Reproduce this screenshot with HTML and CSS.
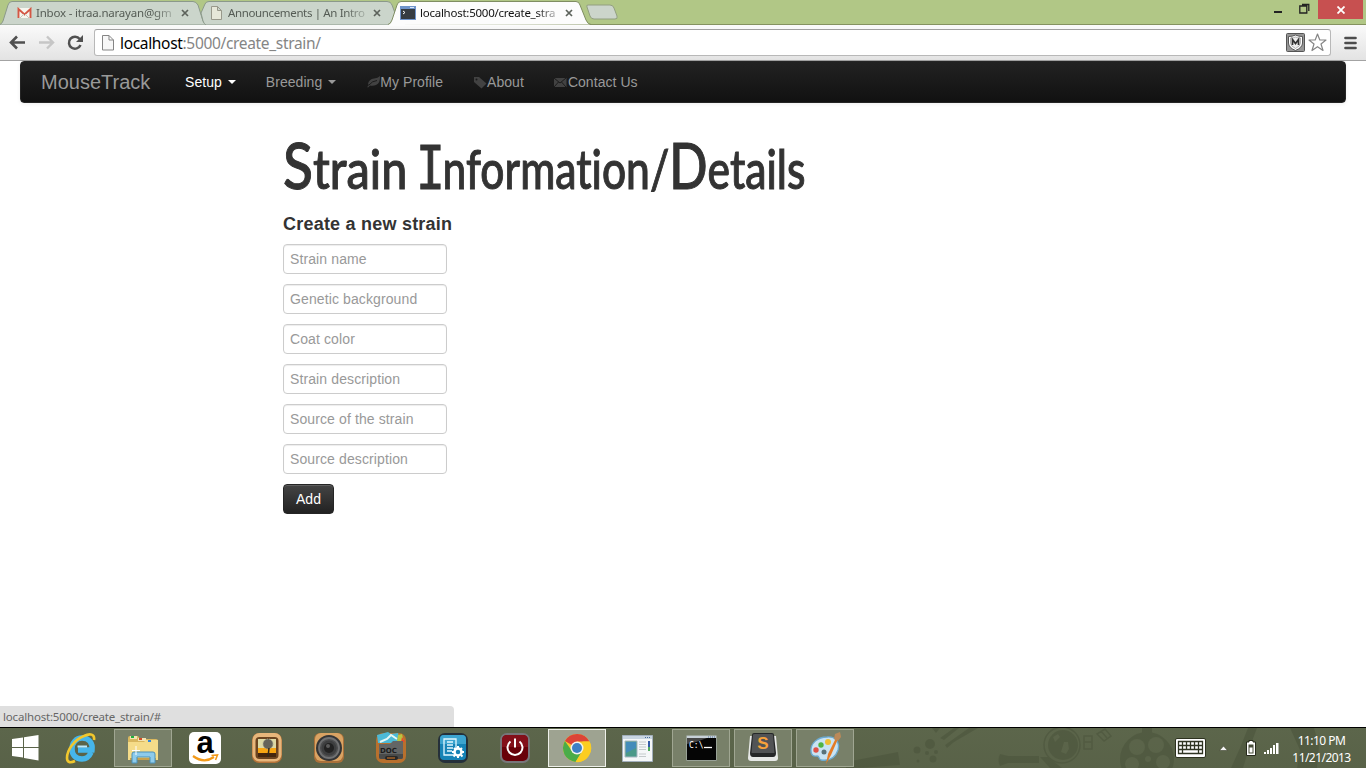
FILE: index.html
```html
<!DOCTYPE html>
<html lang="en">
<head>
<meta charset="utf-8">
<title>MouseTrack</title>
<link rel="stylesheet" href="styles.css">
</head>
<body>
<div class="screen">
  <header class="tabstrip">
    <div class="tab tab-first">
      <svg class="tab-shape" width="208" height="25" viewBox="0 0 208 25"><path d="M-1 25Q2 24 3 21L8 5Q9 1.500 12 1.500H193Q196 1.500 198 5L203 21Q204 24 208 24.500V25Z" fill="#cbd5cb" stroke="#8b998b"/></svg>
      <svg class="fav fav-mail" width="15" height="12" viewBox="0 0 15 12"><path fill="#f6f6ee" d="M1 1h13v10H1z"/><path d="M1.500 11V2L7.500 7.500 13.500 2V11" fill="none" stroke="#d45744" stroke-width="1.900"/><path d="M3 11L7 7M12 11L8 7" stroke="#c5c5bb"/></svg>
      <span class="tab-title t1">Inbox - itraa.narayan@gm</span>
      <svg class="close" width="8" height="8" viewBox="0 0 8 8"><path d="M1 1l6 6M7 1L1 7"/></svg>
    </div>
    <div class="tab tab-second">
      <svg class="tab-shape" width="208" height="25" viewBox="0 0 208 25"><path d="M8 25Q6 24 5 21L3 13L7 4Q8 1.500 11 1.500H189Q193 1.500 194 5L200 21Q201 24 205 24.500V25Z" fill="#cbd5cb" stroke="#8b998b"/></svg>
      <svg class="fav fav-page" width="11" height="14" viewBox="0 0 11 14"><path d="M.5.5h6l4 4v9H.5zM6.500.5v4h4" fill="#e6e8d9" stroke="#98998b"/></svg>
      <span class="tab-title t2">Announcements | An Intro</span>
      <svg class="close" width="8" height="8" viewBox="0 0 8 8"><path d="M1 1l6 6M7 1L1 7"/></svg>
    </div>
    <div class="tab tab-active">
      <svg class="tab-shape" width="210" height="26" viewBox="0 0 210 26"><path d="M-1 25Q3 24 4 20L9 5Q10 1.500 13 1.500H188Q191 1.500 192 5L198 20Q200 24.500 203 24.500" fill="#fcfcfc" stroke="#7f8d62"/><path d="M0 25h202v1H0z" fill="#fcfcfc"/></svg>
      <svg class="fav fav-term" width="16" height="14" viewBox="0 0 16 14"><path fill="#6e93cb" d="M0 0h16v14H0z"/><path fill="#353b42" d="M1 3h14v10H1z"/><path d="M3 5l2 1.500L3 8" stroke="#fff" fill="none"/><path d="M10 1.500h4" stroke="#dbe8f7"/></svg>
      <span class="tab-title t3">localhost:5000/create_stra</span>
      <svg class="close" width="8" height="8" viewBox="0 0 8 8"><path d="M1 1l6 6M7 1L1 7"/></svg>
    </div>
    <svg class="newtab" width="33" height="17" viewBox="0 0 33 17"><path d="M3 1h22q3 0 4 3l3 8q1 3-2 3H9q-3 0-4-3L2 3Q1 1 3 1z" fill="#ccd5cb" stroke="#929f80"/></svg>
    <div class="winbuttons">
      <svg width="30" height="18" viewBox="0 0 30 18"><path fill="#222" d="M0 11h8v2H0z"/></svg>
      <svg width="15" height="18" viewBox="0 0 15 18"><path d="M.8 6h7v7H.8zM3 4.500h6.800V11" fill="none" stroke="#222" stroke-width="1.300"/></svg>
      <div class="win-close"><svg width="8" height="8" viewBox="0 0 8 8"><path d="M.5.5l7 7M7.500.5l-7 7" stroke="#fff" stroke-width="1.800"/></svg></div>
    </div>
  </header>

  <div class="toolbar">
    <svg class="navicons" width="86" height="34" viewBox="0 0 86 34"><path d="M25 16.500H12M17 10.500l-6 6 6 6" fill="none" stroke="#505050" stroke-width="2.600"/><path d="M39 16.500h13M47 10.500l6 6-6 6" fill="none" stroke="#c6c6c6" stroke-width="2.400"/><path d="M80.500 19a6 6 0 1 1-.8-6" fill="none" stroke="#505050" stroke-width="2.500"/><path d="M83 9v7h-7z" fill="#505050"/></svg>
    <div class="omnibox">
      <svg width="12" height="16" viewBox="0 0 12 16"><path d="M.5.5h6.500l4.500 4.500v10H.5zM7 .5V5h4.500" fill="#f7f7f7" stroke="#858585"/></svg>
      <span class="url"><span class="host">localhost</span>:5000/create_strain/</span>
      <svg class="shield" width="19" height="19" viewBox="0 0 19 19"><rect x=".5" y=".5" width="18" height="18" rx="1" fill="#969696" stroke="#555"/><path d="M2.500 3.500q4 0 7-1.500 3 1.500 7 1.500V10q0 4.500-7 7.500-7-3-7-7.500z" fill="#fff" stroke="#555"/><path d="M4.500 5q3 0 5-1 2 1 5 1v5q0 3-5 5.500-5-2.500-5-5.500z" fill="#eee" stroke="#888" stroke-width=".6"/><path d="M6.500 12V6.500l3 4 3-4V12" fill="none" stroke="#333" stroke-width="1.700"/></svg>
      <svg width="19" height="19" viewBox="0 0 19 19"><path d="M9.500 1l2.300 6H18l-5 4 2 6.500-5.500-3.800L4 17.500 6 11 1 7h6.200z" fill="#fff" stroke="#858585" stroke-width="1.200" stroke-linejoin="round"/></svg>
    </div>
    <svg class="menu" width="13" height="14" viewBox="0 0 13 14"><path d="M1.500 2h10M1.500 7h10M1.500 12h10" stroke="#4d4d4d" stroke-width="2.700" stroke-linecap="round"/></svg>
  </div>

  <main class="page">
    <nav class="navbar">
      <a class="brand">MouseTrack</a>
      <a class="nav-item active">Setup<i class="caret"></i></a>
      <a class="nav-item">Breeding<i class="caret"></i></a>
      <a class="nav-item"><svg width="14" height="14" viewBox="0 0 14 14"><path d="M1 9Q2 4 7 3.500 11 3 13 1q.5 7-4 9-3 1.300-6 .5L1 12.500l-.8-.5L2 10z" fill="#424242"/><path d="M2 10Q5 6 10 5.500" stroke="#1b1b1b" fill="none"/></svg>My Profile</a>
      <a class="nav-item"><svg width="14" height="14" viewBox="0 0 14 14"><path d="M0 2h5l7.500 6.500-5 5L0 7z" fill="#424242"/><circle cx="2.500" cy="4.500" r="1" fill="#1b1b1b"/></svg>About</a>
      <a class="nav-item"><svg width="14" height="14" viewBox="0 0 14 14"><path d="M0 3h12.500v9H0z" fill="#424242"/><path d="M0 3l6 5 6-5M0 12l4.500-5M12 12L7.500 7" stroke="#1b1b1b" fill="none"/></svg>Contact Us</a>
    </nav>
    <section class="content">
      <h1><span class="w1"><span class="cap">S</span>train</span><span class="w2"><span class="slab">I</span>nformation/<span class="cap">D</span>etails</span></h1>
      <h2>Create a new strain</h2>
      <form class="form">
        <input type="text" placeholder="Strain name">
        <input type="text" placeholder="Genetic background">
        <input type="text" placeholder="Coat color">
        <input type="text" placeholder="Strain description">
        <input type="text" placeholder="Source of the strain">
        <input type="text" placeholder="Source description">
        <button type="button">Add</button>
      </form>
    </section>
    <div class="status"><span>localhost:5000/create_strain/#</span></div>
  </main>

  <footer class="taskbar">
    <svg class="wallpaper" width="520" height="40" viewBox="846 728 520 40">
      <g fill="#49523a">
        <path d="M846 762l52-10 2 13-40 3h-14z"/><circle cx="930" cy="744" r="5"/><circle cx="917" cy="750" r="3.500"/><circle cx="933" cy="759" r="3.500"/><circle cx="927" cy="753" r="2"/><circle cx="936" cy="752" r="2"/><circle cx="918" cy="761" r="1.500"/>
        <path d="M932 728h8l-4 5zM940 738l14-10h5l-15 12zM945 745l24-17h9l-24 14-7 6z"/>
        <path d="M1000 754l8 2h31v7h-31l-8 3q-3-6 0-12zM997 754l-4-3M997 760h-5"/><circle cx="1063" cy="745" r="15"/>
        <path d="M1040 757l8 0 14 11h-12z"/>
        <circle cx="1147" cy="759" r="27"/><path d="M1142 728h10v6h-10zM1231 768l9-20 8-20h9l-9 24-5 16zM1290 728h24l5 18-2 22h-20l3-18z"/>
      </g>
      <circle cx="1062" cy="745" r="18" fill="none" stroke="#49523a" stroke-width="1.500"/>
      <path d="M1084 736h8v13h-8zM1084 742h8M1097 734l8-5 6 7-7 5zM1101 731l6 7" fill="none" stroke="#49523a" stroke-width="1.500"/>
      <g fill="#5b644a"><circle cx="1137" cy="747" r="8"/><circle cx="1156" cy="745" r="8"/><circle cx="1132" cy="764" r="7"/><circle cx="1163" cy="762" r="7"/><circle cx="1148" cy="759" r="3"/><path d="M1053 737l5-3 2 3-5 5zM1064 742l4 0 1 7-3 5-5-2z"/></g>
    </svg>
    <div class="start"><svg width="27" height="26" viewBox="0 0 27 26"><path fill="#fff" d="M0 4l11-1.500V12H0zM12 2.300L26.500 0v12H12zM0 13h11v9.500L0 21zM12 13h14.500v12.500L12 23z"/></svg></div>
    <div class="tasks">
      <div class="task"><svg width="32" height="32" viewBox="0 0 32 32"><path d="M26 20.500C24 25 21 27 17 27 10 27 7 22 7 17 7 11 11 6 17 6c7 0 11 5 10 12H13" fill="none" stroke="#46b6eb" stroke-width="5.500"/><path d="M12.500 14.500h9.500" stroke="#bce8fb" stroke-width="2"/><path d="M29 8c1-6-4-7-10-4C9 8 2 18 2 26c0 5 4 5 8 3" fill="none" stroke="#f1c72d" stroke-width="2.600"/></svg></div>
      <div class="task open"><svg width="34" height="32" viewBox="0 0 34 32"><path d="M2 6q0-2 2-2h8l2 3h16q2 0 2 2v18H2z" fill="#d9b75e"/><path d="M4 4h7v3H4z" fill="#f2e3b3"/><path d="M5 4h3v2H5z" fill="#1faf3f"/><path d="M12 6h8v3h-8z" fill="#f2e3b3"/><path d="M13 6h3v2h-3z" fill="#d44a25"/><path d="M2 10h16l2-2h12v20H2z" fill="#f5dc89"/><path d="M22 8h3v2h-3z" fill="#3288db"/><path d="M4 27h26" stroke="#c9a14b" stroke-width="2"/><path d="M6 31V22q0-2 2-2h19q2 0 2 2v9h-5v-6H11v6z" fill="#8ecbeb" stroke="#4b91ba"/><path d="M10 14v9M6 18.500h8" stroke="#fff"/></svg></div>
      <div class="task"><svg class="spill" width="32" height="32" viewBox="0 0 32 32"><rect width="32" height="32" rx="5" fill="#fff"/><text x="16" y="21" text-anchor="middle" class="ic-a">a</text><path d="M4 24q11 8 21 1" fill="none" stroke="#f39a19" stroke-width="2.200"/><path d="M22.500 23.500l6-.5-2 5" fill="none" stroke="#f39a19" stroke-width="1.600"/></svg></div>
      <div class="task"><svg width="32" height="32" viewBox="0 0 32 32"><rect x="1" y="1" width="30" height="30" rx="7" fill="#b57338"/><rect x="1.500" y="1" width="29" height="28.500" rx="7" fill="#e7b67b"/><rect x="4.500" y="5" width="23" height="22" rx="4" fill="#6b4420"/><path fill="#dcd9a5" d="M7 7h18v10H7z"/><path fill="#f6a513" d="M7 16h18v6H7z"/><path fill="#45260d" d="M7 21h18v4H7z"/><circle cx="17" cy="12" r="5" fill="#65645a" stroke="#aaa891" stroke-dasharray="1"/><path d="M18 16l-1 9" stroke="#33291c" stroke-width="1.500"/></svg></div>
      <div class="task"><svg width="32" height="32" viewBox="0 0 32 32"><rect x="1" y="1" width="30" height="30" rx="6" fill="#a97039"/><rect x="2" y="1" width="28" height="28" rx="6" fill="#d9a363"/><circle cx="16" cy="16" r="13" fill="#343536"/><circle cx="16" cy="16" r="10" fill="#4d4e4f" stroke="#707172" stroke-width="1.800"/><circle cx="16" cy="16" r="7.500" fill="#3d3e3f"/><circle cx="16" cy="16" r="5" fill="#222"/><circle cx="15" cy="14" r="2" fill="#5b5b5b"/></svg></div>
      <div class="task"><svg width="32" height="32" viewBox="0 0 32 32"><rect x="1" y="1" width="30" height="30" rx="7" fill="#b8702d"/><path d="M2 3l11-3 3 2 7-1 3 10H3z" fill="#4cbad7"/><path d="M5 10l7-3 4-4 6 4" fill="none" stroke="#e6f8f6" stroke-width="2"/><path d="M23 3l4-1 2 8h-7z" fill="#bac442"/><path d="M27 5l3 5h-4z" fill="#e9472d"/><path d="M4 12h11l3-3h10v16q0 2-2 2H6q-2 0-2-2z" fill="#636565"/><path d="M4 22h24v3q0 2-2 2H6q-2 0-2-2z" fill="#4a4b4a"/><text x="5" y="20.500" class="ic-doc">DOC</text><rect x="10" y="24" width="13" height="4" rx="2" fill="#272727"/><path d="M12 26h8" stroke="#dd7b23"/></svg></div>
      <div class="task"><svg width="32" height="32" viewBox="0 0 32 32"><rect x="1" y="1" width="30" height="30" rx="7" fill="#25303a"/><rect x="3" y="3" width="26" height="25" rx="4" fill="#1683b6"/><path d="M3 12V7q0-4 4-4h18q4 0 4 4v5z" fill="#3ca4cf"/><path d="M7 7h12v16H7zM10 10h6M10 13h6M10 16h6M10 19h5" fill="none" stroke="#e2f7ff" stroke-width="1.300"/><circle cx="21" cy="20" r="3.500" fill="#1683b6" stroke="#fff" stroke-width="2.500"/><path d="M21 14v2M21 24v2M15 20h2M25 20h2M17 16l1.500 1.500M24 23l1.500 1.500M25 16l-1.500 1.500M18 23l-1.500 1.500" stroke="#fff" stroke-width="2"/></svg></div>
      <div class="task"><svg width="32" height="32" viewBox="0 0 32 32"><rect x="1" y="1" width="30" height="30" rx="7" fill="#77767a"/><rect x="3" y="3" width="26" height="26" rx="5" fill="#690109"/><path d="M3 15V8q0-5 5-5h16q5 0 5 5v7z" fill="#83101a"/><path d="M11.500 9.500a7.500 7.500 0 1 0 9 0M16 6.500v9" fill="none" stroke="#fff" stroke-width="2"/></svg></div>
      <div class="task current"><svg width="30" height="30" viewBox="0 0 30 30"><circle cx="15" cy="15" r="14" fill="#f7c82b"/><path d="M15 15L2.900 8A14 14 0 0 1 27.500 8.500H15z" fill="#dc4437"/><path d="M2.900 8A14 14 0 0 0 13.500 29L20 18 10 18z" fill="#4aac48"/><path d="M20.500 8.500H27.500A14 14 0 0 1 13.500 29l7-10z" fill="#fbcd21"/><circle cx="15" cy="15" r="6.500" fill="#f3f3ed"/><circle cx="15" cy="15" r="5" fill="#3c80c5"/></svg></div>
      <div class="task shift"><svg width="31" height="27" viewBox="0 0 31 27"><path d="M.5.5h30v26H.5z" fill="#f5f7f8" stroke="#a2afbc"/><path d="M1 1h29v3H1z" fill="#c9d5e1"/><path d="M23 2.500h6" stroke="#456b9c" stroke-dasharray="1"/><path d="M3 6h12v16H3z" fill="#4b9989" stroke="#a9b6c1"/><path d="M4 7h10v6L4 18z" fill="#448cba"/><path d="M17 7h7M17 9.500h7M17 12h7M17 14.500h7M17 19h7M17 21.500h7" stroke="#c4cacb"/><path d="M26 6h2v6h-2z" fill="#345ca7"/><path d="M26 12h2v4h-2z" fill="#54af61"/></svg></div>
      <div class="task open"><svg width="31" height="26" viewBox="0 0 31 26"><path d="M.5.5h30v25H.5z" fill="#050505" stroke="#98a196"/><path d="M1 1h29v2H1z" fill="#c7d0d7"/><path d="M22 2h7" stroke="#52759f" stroke-dasharray="1"/><path d="M1 3h20Q12 7 1 9z" fill="#474747"/><text x="3" y="13" class="ic-cmd">C:\</text><path d="M18 12.500h8" stroke="#fff" stroke-width="1.300"/></svg></div>
      <div class="task open"><svg class="sublime" width="32" height="30" viewBox="0 0 32 30"><path d="M3 3h26l2 22q0 3-3 3H4q-3 0-3-3z" fill="#e6e8e6"/><path d="M5 2q0-2 2-2h18q2 0 2 2l2 18q0 4-3 4H6q-3 0-3-4z" fill="#252728"/><path d="M6 2q0-1 2-1h16q2 0 2 1l1.500 18h-23z" fill="#515355"/><text x="16" y="16" text-anchor="middle" class="ic-s">S</text></svg></div>
      <div class="task open"><svg class="paint" width="33" height="33" viewBox="0 0 33 33"><path d="M2 20C1 11 9 5 18 5c9-1 13 6 11 13-3 9-10 11-17 10-3-1-1-4-4-4-2 0-5 1-6-4z" fill="#c9e3f2" stroke="#6baad1" stroke-width="1.300"/><circle cx="7" cy="18" r="2.700" fill="#de5146"/><circle cx="12" cy="13" r="2.700" fill="#50b442"/><circle cx="19" cy="10" r="3" fill="#efbe33"/><circle cx="15" cy="20" r="2.500" fill="#597279"/><path d="M27 6L19 22l-2 10 5-9 7-16z" fill="#e47c26"/><path d="M26 2l5-2 1 5-3 4-4-2z" fill="#bb8959"/></svg></div>
    </div>
    <div class="tray">
      <svg width="31" height="20" viewBox="0 0 31 20"><rect x=".5" y=".5" width="30" height="19" rx="1.500" fill="#fff" stroke="#2d321f"/><path d="M3.500 3.500h24v12h-24zM3.500 7.500h24M3.500 11.500h24M7.500 3.500v12M11.500 3.500v8M15.500 3.500v8M19.500 3.500v8M23.500 3.500v12" fill="none" stroke="#303523" stroke-width="1.300"/></svg>
      <svg class="up" width="9" height="6" viewBox="0 0 9 6"><path d="M.5 5.500L4.500 1l4 4.500z" fill="#f4f4f4" stroke="#3c422e" stroke-width=".6"/></svg>
      <svg class="battery" width="10" height="16" viewBox="0 0 10 16"><path d="M3 .5h4V2h2.500v13.500H.5V2H3z" fill="#fff" stroke="#262a1b"/><path d="M2.500 4.500h5v9h-5z" fill="#474d39"/><path d="M3.500 7.500h3v5h-3z" fill="#fff"/></svg>
      <svg class="signal" width="17" height="13" viewBox="0 0 17 13"><path d="M1 10h2v2H1zM4 8h2v4H4zM7 6h2v6H7zM10 3h2v9h-2zM13 1h2.500v11H13z" fill="#fff"/></svg>
      <div class="clock"><span>11:10 PM</span><span>11/21/2013</span></div>
    </div>
  </footer>
</div>
</body>
</html>
```
FILE: styles.css
```css
* { box-sizing: border-box; }
body { margin: 0; background: #fff; font-family: "Liberation Sans", Arial, sans-serif; }
svg { display: block; flex: none; }
.screen { width: 1366px; height: 768px; display: flex; flex-direction: column; overflow: hidden; }

.tabstrip { height: 25px; flex: none; display: flex; background: #b1c786; border-bottom: 1px solid #84925f; font-family: "Noto Sans", sans-serif; }
.tab { position: relative; display: flex; align-items: center; height: 25px; flex: none; }
.tab > :not(.tab-shape) { position: relative; }
.tab-shape { position: absolute; left: 0; top: 0; }
.tab-first { width: 198px; padding-left: 17px; }
.tab-second { width: 190px; padding-left: 13px; }
.tab-active { width: 198px; padding-left: 12px; z-index: 1; height: 26px; }
.tab-title { font-size: 11.500px; line-height: 16px; white-space: nowrap; color: #555c55; -webkit-mask-image: linear-gradient(90deg, #000 85%, transparent 105%); mask-image: linear-gradient(90deg, #000 85%, transparent 105%); }
.tab-first .tab-title { width: 138px; margin: 0 7px 0 4px; letter-spacing: -.2px; }
.tab-second .tab-title { width: 138px; margin: 0 7px 0 6px; letter-spacing: -.36px; }
.tab-active .tab-title { width: 137px; margin: 0 8px 0 4px; color: #111; letter-spacing: -.25px; }
.close path { stroke: #5c625b; stroke-width: 1.700; }
.newtab { margin: 4px 0 0 -1px; }
.winbuttons { margin: 0 3px 0 auto; display: flex; width: 89px; }
.winbuttons > svg { margin-right: -5px; }
.win-close { width: 45px; height: 19px; margin-left: auto; background: #c75050; display: flex; align-items: center; justify-content: center; }

.toolbar { height: 36px; flex: none; display: flex; align-items: center; background: linear-gradient(#fafafa, #e3e3e3); border-bottom: 1px solid #a3a3a3; }
.omnibox { width: 1237px; height: 27px; margin-left: 8px; padding: 0 3px 0 7px; display: flex; align-items: center; background: #fff; border: 1px solid #b8b8b8; border-top-color: #a0a0a0; border-radius: 3px; }
.url { font: 15.500px/20px "Noto Sans", sans-serif; color: #858585; margin-left: 6px; letter-spacing: -.33px; white-space: nowrap; }
.host { color: #000; }
.shield { margin: 0 3px 0 auto; }
.menu { margin-left: 13px; }

.page { flex: 1; min-height: 0; display: flex; flex-direction: column; color: #333; }
.navbar { height: 42px; margin: 0 20px; padding-left: 21px; display: flex; align-items: center; border: 1px solid #252525; border-radius: 4px; background: linear-gradient(#222, #111); color: #999; font-size: 14px; line-height: 20px; box-shadow: 0 1px 4px rgba(0,0,0,.065); }
.brand { font-size: 20px; width: 129px; margin-left: -1px; }
.nav-item { display: flex; align-items: center; padding: 0 15px; letter-spacing: .05px; }
.nav-item svg { margin: 0 -.5px 0 .5px; }
.nav-item.active { color: #fff; }
.caret { border: 4px solid transparent; border-top-color: currentColor; border-bottom: 0; margin-left: 6px; }
.content { padding: 31px 0 0 283px; flex: 1; }
h1 { margin: 0; height: 79px; display: flex; font: 500 54px/70px Lato, sans-serif; color: #333; font-variant-ligatures: none; -webkit-text-stroke: 1px #333; }
h1 > span { display: block; transform-origin: 0 50%; white-space: nowrap; }
h1 .cap { font-size: 64px; line-height: 0; }
h1 .slab { font: 61px/0 "DejaVu Sans Mono", monospace; margin: 0 -3px 0 -5px; }
.w1 { width: 137px; transform: scaleX(.862); }
.w2 { transform: scaleX(.787); }
h2 { margin: 0 0 9px; font-size: 18px; line-height: 22px; letter-spacing: .22px; }
.form { display: flex; flex-direction: column; gap: 10px; align-items: flex-start; }
.form input { width: 164px; height: 30px; padding: 4px 6px; border: 1px solid #ccc; border-radius: 4px; font: 14px/20px "Liberation Sans", sans-serif; letter-spacing: .11px; box-shadow: inset 0 1px 1px rgba(0,0,0,.075); }
.form input::placeholder { color: #999; opacity: 1; }
.form button { width: 51px; height: 30px; padding: 0; font: 14px/20px "Liberation Sans", sans-serif; color: #fff; border: 1px solid #252525; border-radius: 4px; background: linear-gradient(#444, #222); box-shadow: inset 0 1px 0 rgba(255,255,255,.15); }
.status { width: 454px; height: 21px; flex: none; padding-left: 3px; background: #dfdfdf; border-radius: 0 4px 0 0; color: #666; font: 11.500px/21px "Noto Sans", sans-serif; letter-spacing: -.18px; }

.taskbar { position: relative; height: 41px; flex: none; border-top: 1px solid #000; background: linear-gradient(#5c664b, #596248); display: flex; align-items: stretch; }
.taskbar > :not(.wallpaper) { position: relative; }
.wallpaper { position: absolute; right: 0; top: 0; opacity: .5; }
.start { width: 52px; display: flex; align-items: center; padding-left: 12px; }
.tasks { display: flex; gap: 4px; padding: 1px 0; }
.task { width: 58px; display: flex; align-items: center; justify-content: center; }
.task.open { background: #788069; border: 1px solid #a0a692; }
.task.current { background: #9ea391; border: 1px solid #eef0e9; }
.task.shift { padding-right: 3px; }
.spill { overflow: visible; }
.ic-a { font: bold 31px "Liberation Sans", sans-serif; fill: #000; }
.ic-doc { font: bold 7px "DejaVu Sans", sans-serif; fill: #1c1c1c; }
.ic-cmd { font: 8px "DejaVu Sans Mono", monospace; fill: #fff; }
.ic-s { font: bold 17px "Liberation Sans", sans-serif; fill: #f6a13b; }
.tray { margin-left: auto; display: flex; align-items: center; color: #fff; }
.up { margin-left: 13px; }
.battery { margin-left: 18px; }
.signal { margin-left: 7px; }
.clock { width: 84px; padding-right: 5px; display: flex; flex-direction: column; align-items: center; margin-left: 2px; font: 12px/17px "Noto Sans", sans-serif; letter-spacing: -.55px; padding-top: 1px; }
```
